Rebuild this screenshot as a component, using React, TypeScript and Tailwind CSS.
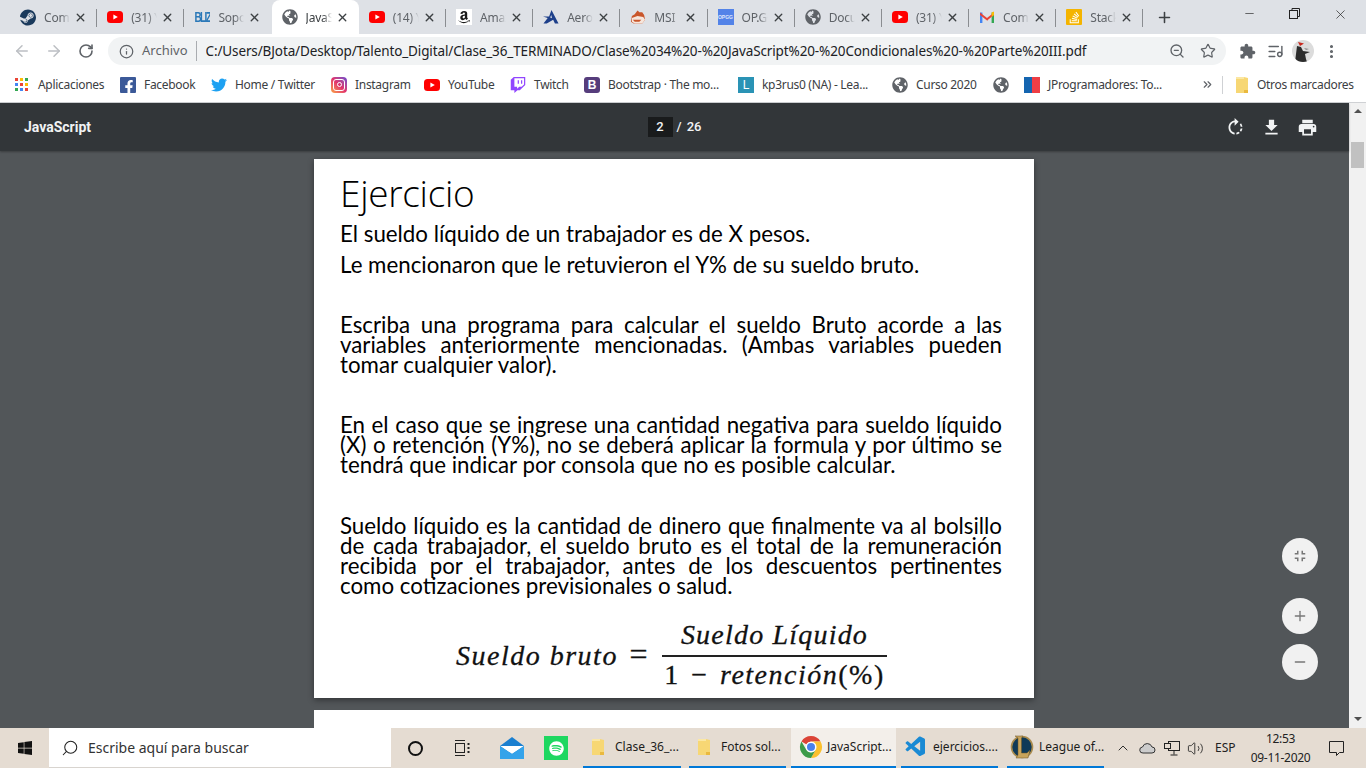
import React from "react";
import { ArrowLeft, ArrowRight, RotateCw, Info, ZoomOut, Search, Star, ListMusic, MoreVertical, Plus, X, Minus, ChevronUp, Volume2, ChevronsRight } from "lucide-react";
import { FaSteam, FaAmazon, FaTwitter, FaTwitch, FaFacebookF, FaSpotify, FaWindows, FaStackOverflow, FaGlobeAmericas } from "react-icons/fa";
import { VscVscode } from "react-icons/vsc";

const YT = () => (
  <svg width="16" height="16" viewBox="0 0 16 16"><rect x="0" y="2" width="16" height="12" rx="3.5" fill="#f00" /><path d="M6.4 5.4 10.8 8l-4.4 2.6z" fill="#fff" /></svg>
);
const Globe = () => <FaGlobeAmericas size={16} color="#5f6368" />;
const Steam = () => <FaSteam size={17} color="#1b3a5c" />;
const Blizz = () => <span className="block w-[17px] h-4 text-[10px] leading-4 font-bold text-[#2a78b8] tracking-[-1.6px] font-['Liberation_Sans',sans-serif] scale-y-[1.5] overflow-hidden">BLIZZ</span>;
const Amazon = () => <span className="flex w-4 h-4 bg-white items-center justify-center"><FaAmazon size={14} color="#1a1a1a" /></span>;
const Aero = () => (
  <svg width="17" height="16" viewBox="0 0 17 16"><path fillRule="evenodd" d="M9 0.5 16.5 15h-3.8L10.8 11 4 15H0.5L5 9 0 7.5h6.5zM8.8 6 7.6 8.6l2 .8z" fill="#1d3f8a" /></svg>
);
const Msi = () => (
  <svg width="17" height="16" viewBox="0 0 17 16"><path d="M8 1l2 2 3 0 2 3 1 5-3 4H4L1 13l1-6 3-2z" fill="#c9562b" /><path d="M2 9l6-2 6 1 2 3-3 4H5l-3-2z" fill="#f6e6dc" /><path d="M3 11h9l-2 2H5z" fill="#c9562b" /></svg>
);
const OpGg = () => <span className="flex w-4 h-4 bg-[#5383e8] items-center justify-center text-[5px] leading-none font-bold text-white/80 font-['Liberation_Sans',sans-serif]">OPGG</span>;
const Gmail = () => (
  <svg width="16" height="16" viewBox="0 0 16 16"><path d="M1 3.5h2.4V14H1z" fill="#4285f4" /><path d="M12.6 3.5H15V14h-2.4z" fill="#34a853" /><path d="M1 3.5 8 9l1.2 2L8 11.4 1 6z" fill="#ea4335" /><path d="M15 3.5 8 9v2.4L15 6z" fill="#ea4335" /><path d="M12.6 3.5 15 2.5V6l-2.4 2z" fill="#fbbc04" /></svg>
);
const Stack = () => <span className="flex w-4 h-4 bg-[#f4b400] items-center justify-center rounded-[1px]"><FaStackOverflow size={13} color="#fff" /></span>;
const Fb = () => <span className="flex w-4 h-4 bg-[#3b5998] items-end justify-end overflow-hidden rounded-[1px]"><FaFacebookF size={14} color="#fff" className="translate-y-[1px]" /></span>;
const Insta = () => (
  <span className="flex w-4 h-4 rounded-[4px] items-center justify-center bg-gradient-to-tr from-[#f9a03c] via-[#e1306c] to-[#6a3fd0]">
    <span className="flex w-3 h-3 rounded-[3px] border border-white items-center justify-center"><span className="block w-[5px] h-[5px] rounded-full border border-white" /></span>
  </span>
);
const Boot = () => <span className="flex w-4 h-4 rounded-[3px] bg-[#563d7c] items-center justify-center text-white text-[12px] leading-none font-bold font-['Liberation_Sans',sans-serif]">B</span>;
const LBox = () => <span className="flex w-4 h-4 bg-[#2a93b5] items-center justify-center text-white text-[12px] leading-none font-['Liberation_Sans',sans-serif]">L</span>;
const JProg = () => <span className="flex w-4 h-4"><span className="w-2 h-4 bg-[#1565b0]" /><span className="w-2 h-4 bg-[#ee3e45]" /></span>;
const Folder = ({ w = 14 }: { w?: number }) => (
  <svg width={w} height="18" viewBox="0 0 14 18"><path d="M1 1h8l4 1v15H1z" fill="#f7d774" /><path d="M1 1h8v2H1z" fill="#fbe7a3" /><path d="M9 14h4v3H9z" fill="#eab93f" /></svg>
);
const Apps = () => (
  <svg width="13" height="13" viewBox="0 0 13 13">
    {["#ea4335","#fbbc04","#34a853","#4285f4","#ea4335","#fbbc04","#34a853","#4285f4","#ea4335"].map((c, i) => (
      <rect key={i} x={(i % 3) * 5} y={Math.floor(i / 3) * 5} width="3" height="3" fill={c} />
    ))}
  </svg>
);
const Chrome = () => (
  <svg width="24" height="24" viewBox="0 0 24 24">
    <path d="M12 1a11 11 0 0 1 9.53 5.5H12a5.5 5.5 0 0 0-4.76 2.75L2.47 6.5A11 11 0 0 1 12 1z" fill="#db4437" />
    <path d="M21.53 6.5A11 11 0 0 1 12 23l4.76-8.25A5.5 5.5 0 0 0 12 6.5z" fill="#fbc02d" />
    <path d="M12 23A11 11 0 0 1 2.47 6.5l4.77 8.25A5.5 5.5 0 0 0 16.76 14.75z" fill="#3d9b49" />
    <circle cx="12" cy="12" r="5.2" fill="#fff" /><circle cx="12" cy="12" r="4" fill="#4a80ec" />
  </svg>
);
const Lol = () => (
  <svg width="24" height="26" viewBox="0 0 24 26">
    <circle cx="12" cy="13" r="10.5" fill="#0f3a58" stroke="#a98b4e" strokeWidth="1.6" />
    <path d="M5 2h8l-1.5 2v15H17l3-3-2 8H6l2-3V4z" fill="#c8a45c" stroke="#6d5526" strokeWidth=".5" />
  </svg>
);
const Mail = () => (
  <svg width="24" height="24" viewBox="0 0 24 24">
    <path d="M12 1 24 10v13H0V10z" fill="#1a7fd0" /><path d="M0 10h24L12 18z" fill="#fff" /><path d="M0 10l12 8 12-8v13H0z" fill="#35a3ea" />
  </svg>
);
const Avatar = () => (
  <svg width="22" height="22" viewBox="0 0 22 22" className="rounded-full">
    <rect width="22" height="22" fill="#dcdcdc" />
    <path d="M6 2l6 1.5L8 6z" fill="#c8281e" />
    <path d="M5 6l4 1 2 4 7 1-5 2 1 5 1 3H3l1-8z" fill="#2c2c2c" />
    <path d="M12 8l5 1-3 1z" fill="#8a8a8a" />
  </svg>
);

const tabs = [
  { t: "Comunidad", i: <Steam /> },
  { t: "(31) YouTube", i: <YT /> },
  { t: "Soporte", i: <Blizz /> },
  { t: "JavaScript", i: <Globe />, active: true },
  { t: "(14) YouTube", i: <YT /> },
  { t: "Amazon", i: <Amazon /> },
  { t: "Aerolab", i: <Aero /> },
  { t: "MSI", i: <Msi /> },
  { t: "OP.GG", i: <OpGg /> },
  { t: "Documentos", i: <Globe /> },
  { t: "(31) YouTube", i: <YT /> },
  { t: "Compras", i: <Gmail /> },
  { t: "Stack", i: <Stack /> },
];

const marks = [
  { w: "w-[105px]", t: "Aplicaciones", i: <Apps />, g: "gap-[10px]" },
  { w: "w-[91px]", t: "Facebook", i: <Fb />, g: "gap-2" },
  { w: "w-[120px]", t: "Home / Twitter", i: <FaTwitter size={16} color="#1da1f2" />, g: "gap-2" },
  { w: "w-[93px]", t: "Instagram", i: <Insta />, g: "gap-2" },
  { w: "w-[86px]", t: "YouTube", i: <YT />, g: "gap-2" },
  { w: "w-[74px]", t: "Twitch", i: <FaTwitch size={16} color="#9146ff" />, g: "gap-2" },
  { w: "w-[154px]", t: "Bootstrap · The mo...", i: <Boot />, g: "gap-2" },
  { w: "w-[154px]", t: "kp3rus0 (NA) - Lea...", i: <LBox />, g: "gap-2" },
  { w: "w-[101px]", t: "Curso 2020", i: <Globe />, g: "gap-2" },
  { w: "w-[31px]", t: "", i: <Globe />, g: "gap-0" },
  { w: "w-[176px]", t: "JProgramadores: To...", i: <JProg />, g: "gap-2" },
];

const Icon = ({ d, size = 24, className = "" }: { d: string; size?: number; className?: string }) => (
  <svg width={size} height={size} viewBox="0 0 24 24" fill="currentColor" className={className}><path d={d} /></svg>
);

const Line = ({ children, last }: { children: React.ReactNode; last?: boolean }) => (
  <div className={last ? "h-5 leading-5 whitespace-nowrap" : "h-5 leading-5 whitespace-nowrap text-justify [text-align-last:justify]"}>{children}</div>
);

const TaskApp = ({ icon, label, w, active }: { icon: React.ReactNode; label: string; w: string; active?: boolean }) => (
  <div className={`${w} h-full flex items-center border-b-2 border-[#0078d7] ${active ? "bg-[#f3efea] gap-1 pl-2" : "gap-[5px] pl-[3px]"}`}>
    <span className="w-6 flex justify-center shrink-0">{icon}</span>
    <span className="text-[12px] whitespace-nowrap text-[#1c1c1c]">{label}</span>
  </div>
);

export default function App() {
  return (
    <div className="w-[1366px] h-[768px] overflow-hidden flex flex-col font-['Noto_Sans',sans-serif] bg-white">
      {/* tab strip */}
      <div className="h-[34px] bg-[#dee1e6] flex items-stretch pl-[10px] shrink-0">
        {tabs.map((tab, i) => {
          const next = tabs[i + 1];
          const sep = !tab.active && !(next && next.active);
          return (
            <div key={i} className={`w-[87.2px] flex items-center pl-[10px] relative ${tab.active ? "bg-white rounded-t-lg" : ""}`}>
              <span className="w-4 h-4 flex items-center justify-center shrink-0">{tab.i}</span>
              <span className={`ml-[8px] w-[26px] overflow-hidden whitespace-nowrap text-[12px] tracking-[-0.2px] pt-px [mask-image:linear-gradient(to_right,black_65%,transparent)] ${tab.active ? "text-[#3c4043]" : "text-[#5f6368]"}`}>{tab.t}</span>
              <X size={13} strokeWidth={2.5} className="ml-[4px] text-[#3c4043]" />
              {sep && <span className="absolute right-0 top-[9px] h-[18px] w-px bg-[#8a8d91]" />}
            </div>
          );
        })}
        <div className="ml-[13px] flex items-center"><Plus size={17} strokeWidth={2.2} className="text-[#3c4043]" /></div>
        <div className="flex-1" />
        <div className="flex items-start pt-[7px] text-[#222] pr-[18px] gap-[32px]">
          <Minus size={13} strokeWidth={1.2} />
          <svg width="13" height="13" viewBox="0 0 13 13" fill="none" stroke="#222"><rect x="1.5" y="3.5" width="8" height="8" /><path d="M4 3.5V1.5h7.5v8H9.5" /></svg>
          <X size={15} strokeWidth={1.1} />
        </div>
      </div>

      {/* toolbar */}
      <div className="h-[34px] bg-white flex items-center shrink-0">
        <div className="w-[108px] flex items-center pl-[13px] gap-[14px] shrink-0">
          <ArrowLeft size={18} className="text-[#bcbfc3]" strokeWidth={2} />
          <ArrowRight size={18} className="text-[#bcbfc3]" strokeWidth={2} />
          <RotateCw size={16} className="text-[#5f6368] ml-[1px]" strokeWidth={2.4} />
        </div>
        <div className="w-[1118px] h-[28px] bg-[#f1f3f4] rounded-full flex items-center pl-[11px] pr-[10px] shrink-0">
          <Info size={15} className="text-[#5f6368]" strokeWidth={2} />
          <span className="ml-[8px] text-[13px] text-[#5f6368] whitespace-nowrap">Archivo</span>
          <span className="ml-[8px] h-[20px] w-px bg-[#a9acb0]" />
          <span className="ml-[9px] text-[13.5px] text-[#202124] whitespace-nowrap w-[890px] overflow-hidden tracking-[-0.12px]">C:/Users/BJota/Desktop/Talento_Digital/Clase_36_TERMINADO/Clase%2034%20-%20JavaScript%20-%20Condicionales%20-%20Parte%20III.pdf</span>
          <div className="flex-1" />
          <ZoomOut size={16} className="text-[#5f6368] mr-[15px]" strokeWidth={2} />
          <Star size={16} className="text-[#5f6368]" strokeWidth={1.8} />
        </div>
        <div className="flex items-center pl-[13px]">
          <Icon size={17} className="text-[#5f6368]" d="M20.5 11H19V7c0-1.1-.9-2-2-2h-4V3.5C13 2.12 11.88 1 10.5 1S8 2.12 8 3.5V5H4c-1.1 0-1.99.9-1.99 2v3.8H3.5c1.49 0 2.7 1.21 2.7 2.7s-1.21 2.7-2.7 2.7H2V20c0 1.1.9 2 2 2h3.8v-1.5c0-1.49 1.21-2.7 2.7-2.7 1.49 0 2.7 1.21 2.7 2.7V22H17c1.1 0 2-.9 2-2v-4h1.5c1.38 0 2.5-1.12 2.5-2.5S21.88 11 20.5 11z" />
          <ListMusic size={17} className="ml-[11px] text-[#5f6368]" strokeWidth={2} />
          <span className="ml-[8px]"><Avatar /></span>
          <MoreVertical size={17} className="ml-[9px] text-[#5f6368]" strokeWidth={2.4} />
        </div>
      </div>

      {/* bookmarks */}
      <div className="h-[35px] bg-white flex items-center pl-[15px] pb-px shrink-0 border-b border-[#cfd1d4]">
        {marks.map((m, i) => (
          <div key={i} className={`${m.w} flex items-center ${m.g} shrink-0`}>
            <span className="flex items-center justify-center shrink-0">{m.i}</span>
            {m.t && <span className="text-[12px] whitespace-nowrap text-[#3c4043] tracking-[-0.3px]">{m.t}</span>}
          </div>
        ))}
        <ChevronsRight size={13} className="ml-[1px] text-[#5f6368]" strokeWidth={2.2} />
        <span className="ml-[8px] h-[18px] w-px bg-[#cfd1d4]" />
        <span className="ml-[12px]"><Folder /></span>
        <span className="ml-[8px] text-[12px] whitespace-nowrap text-[#3c4043] tracking-[-0.3px]">Otros marcadores</span>
      </div>

      {/* viewer */}
      <div className="flex-1 min-h-0 flex">
        <div className="w-[1349px] flex flex-col relative">
          <div className="h-[48px] bg-[#323639] grid grid-cols-[1fr_auto_1fr] items-center shrink-0 shadow-[0_1px_2px_rgba(0,0,0,0.3)] z-10">
            <span className="pl-6 text-[14px] font-bold text-[#f1f3f4] font-['Roboto',sans-serif]">JavaScript</span>
            <div className="flex items-center text-[13px] font-medium text-[#f1f3f4] font-['Roboto',sans-serif]">
              <span className="w-[25px] h-[20px] bg-[#191b1c] flex items-center justify-center">2</span>
              <span className="ml-[4px]">/</span>
              <span className="ml-[5px]">26</span>
            </div>
            <div className="flex items-center justify-end gap-[15px] pr-[31px] text-[#f1f3f4]">
              <Icon size={21} d="M15.55 5.55L11 1v3.07C7.06 4.56 4 7.92 4 12s3.05 7.44 7 7.93v-2.02c-2.84-.48-5-2.94-5-5.91s2.16-5.43 5-5.91V10l4.55-4.45zM19.93 11c-.17-1.39-.72-2.73-1.62-3.89l-1.42 1.42c.54.75.88 1.6 1.02 2.47h2.02zM13 17.9v2.02c1.39-.17 2.74-.71 3.9-1.61l-1.44-1.44c-.75.54-1.59.89-2.46 1.03zm3.89-2.42l1.42 1.41c.9-1.16 1.45-2.5 1.62-3.89h-2.02c-.14.87-.48 1.72-1.02 2.48z" />
              <Icon size={21} d="M19 9h-4V3H9v6H5l7 7 7-7zM5 18v2h14v-2H5z" />
              <Icon size={21} d="M19 8H5c-1.66 0-3 1.34-3 3v6h4v4h12v-4h4v-6c0-1.66-1.34-3-3-3zm-3 11H8v-5h8v5zm3-7c-.55 0-1-.45-1-1s.45-1 1-1 1 .45 1 1-.45 1-1 1zm-1-9H6v4h12V3z" />
            </div>
          </div>

          <div className="flex-1 min-h-0 bg-[#525659] overflow-hidden flex flex-col items-center pt-2 pr-px gap-3">
            <div className="w-[720px] h-[539px] shrink-0 bg-white pl-[26px] pr-[32px] text-black font-['Lato',sans-serif] shadow-[0_2px_6px_rgba(0,0,0,0.4)]">
              <div className="pt-[13px] h-[60px] text-[37px] leading-[42px] font-light font-['Open_Sans',sans-serif] tracking-[-0.3px]">Ejercicio</div>
              <div className="text-[22.3px]">
                <div className="h-[30px] leading-[30px]">El sueldo líquido de un trabajador es de X pesos.</div>
                <div className="mt-px h-[30px] leading-[30px]">Le mencionaron que le retuvieron el Y% de su sueldo bruto.</div>
                <div className="mt-[35px]">
                  <Line>Escriba una programa para calcular el sueldo Bruto acorde a las</Line>
                  <Line>variables anteriormente mencionadas. (Ambas variables pueden</Line>
                  <Line last>tomar cualquier valor).</Line>
                </div>
                <div className="mt-[40px]">
                  <Line>En el caso que se ingrese una cantidad negativa para sueldo líquido</Line>
                  <Line>(X) o retención (Y%), no se deberá aplicar la formula y por último se</Line>
                  <Line last>tendrá que indicar por consola que no es posible calcular.</Line>
                </div>
                <div className="mt-[41px]">
                  <Line>Sueldo líquido es la cantidad de dinero que finalmente va al bolsillo</Line>
                  <Line>de cada trabajador, el sueldo bruto es el total de la remuneración</Line>
                  <Line>recibida por el trabajador, antes de los descuentos pertinentes</Line>
                  <Line last>como cotizaciones previsionales o salud.</Line>
                </div>
              </div>
              <div className="mt-[21px] pl-[116px] flex items-center font-['Liberation_Serif',serif] italic text-[28px] text-[#111] tracking-[1.5px] [-webkit-text-stroke:0.3px_#111]">
                <span className="w-[206px] whitespace-nowrap">Sueldo bruto <span className="not-italic ml-[3px] text-[32px] leading-none">=</span></span>
                <div className="w-[225px] flex flex-col items-center">
                  <span className="leading-[36px] h-[38px] whitespace-nowrap tracking-[1.2px]">Sueldo Líquido</span>
                  <span className="w-full h-[2px] bg-[#222]" />
                  <span className="leading-[36px] h-[38px] whitespace-nowrap"><span className="not-italic">1 <span className="mx-[3px]">−</span> </span>retención<span className="not-italic">(%)</span></span>
                </div>
              </div>
            </div>
            <div className="w-[720px] h-[300px] shrink-0 bg-white" />
          </div>

          {/* floating zoom controls */}
          <div className="absolute left-[1282px] top-[435px] flex flex-col">
            <span className="w-9 h-9 rounded-full bg-[#f1f1f1] flex items-center justify-center text-[#777]">
              <Icon size={18} d="M5 16h3v3h2v-5H5v2zm3-8H5v2h5V5H8v3zm6 11h2v-3h3v-2h-5v5zm2-11V5h-2v5h5V8h-3z" />
            </span>
            <span className="mt-6 w-9 h-9 rounded-full bg-[#f1f1f1] flex items-center justify-center text-[#777]"><Plus size={16} strokeWidth={2} /></span>
            <span className="mt-[10px] w-9 h-9 rounded-full bg-[#f1f1f1] flex items-center justify-center text-[#777]"><Minus size={16} strokeWidth={2} /></span>
          </div>
        </div>

        {/* scrollbar */}
        <div className="w-[17px] bg-[#f1f1f1] flex flex-col items-center relative">
          <span className="mt-[6px] w-0 h-0 border-x-[4px] border-x-transparent border-b-[4px] border-b-[#505050]" />
          <span className="mt-[29px] w-[13px] h-[26px] bg-[#c1c1c1]" />
          <div className="flex-1" />
          <span className="mb-[7px] w-0 h-0 border-x-[4px] border-x-transparent border-t-[4px] border-t-[#505050]" />
        </div>
      </div>

      {/* taskbar */}
      <div className="h-[40px] bg-[#e5dcd2] flex items-center shrink-0 font-['Noto_Sans',sans-serif]">
        <div className="w-[49px] flex justify-center shrink-0"><FaWindows size={16} color="#111" /></div>
        <div className="w-[342px] h-full bg-white flex items-center pl-[12px] border-b border-[#d8d4cf] shrink-0">
          <Search size={18} strokeWidth={1.4} className="text-[#222] -scale-x-100" />
          <span className="ml-[9px] text-[14px] text-[#333] whitespace-nowrap">Escribe aquí para buscar</span>
        </div>
        <div className="w-[192px] flex items-center shrink-0 h-full">
          <span className="ml-[17px] w-[15px] h-[15px] rounded-full border-[2.5px] border-[#111]" />
          <svg className="ml-[30px]" width="18" height="18" viewBox="0 0 18 18" fill="none" stroke="#222"><path d="M2 1.5h10M2 16.5h10" /><rect x="2.5" y="4.5" width="9" height="9" /><path d="M15.5 4v2M15.5 8v2M15.5 12v2" strokeWidth="2" /></svg>
          <span className="ml-[29px]"><Mail /></span>
          <span className="ml-[20px] w-6 h-6 bg-[#1ed760] flex items-center justify-center"><FaSpotify size={15} color="#fff" /></span>
        </div>
        <div className="flex items-center h-full gap-[5px]">
          <TaskApp w="w-[98px]" icon={<Folder />} label="Clase_36_..." />
          <div className="ml-[3px]" />
        </div>
        <div className="flex items-center h-full">
          <TaskApp w="w-[97px]" icon={<Folder />} label="Fotos sol..." />
          <div className="w-[5px]" />
          <TaskApp w="w-[105px]" icon={<Chrome />} label="JavaScript..." active />
          <div className="w-[5px]" />
          <TaskApp w="w-[97px]" icon={<VscVscode size={24} color="#1a8ad4" />} label="ejercicios...." />
          <div className="w-[9px]" />
          <TaskApp w="w-[97px]" icon={<Lol />} label="League of..." />
        </div>
        <div className="flex-1 flex items-center h-full text-[#222]">
          <ChevronUp size={16} strokeWidth={1.4} className="ml-[11px]" />
          <svg className="ml-[8px]" width="17" height="12" viewBox="0 0 17 12"><path d="M4 11a3 3 0 0 1-.5-6 5 5 0 0 1 9.5 0 3 3 0 0 1 0 6z" fill="#ccc" stroke="#333" /></svg>
          <svg className="ml-[8px]" width="16" height="17" viewBox="0 0 16 17" fill="none" stroke="#222"><rect x="4.5" y="1.5" width="11" height="9" /><rect x="0.5" y="3.5" width="6" height="5" fill="#e5dcd2" /><path d="M10 10.5v4M6.5 15h7" /></svg>
          <Volume2 size={17} strokeWidth={1.2} className="ml-[7px]" />
          <span className="ml-[11px] text-[12px]">ESP</span>
          <div className="ml-[14px] w-[62px] flex flex-col items-center text-[12px] leading-[19px] tracking-[-0.3px] whitespace-nowrap">
            <span>12:53</span>
            <span>09-11-2020</span>
          </div>
          <svg className="ml-[16px]" width="17" height="17" viewBox="0 0 17 17" fill="none" stroke="#222"><path d="M1.5 1.5h14v11h-4l-3 3v-3h-7z" /></svg>
        </div>
      </div>
    </div>
  );
}
